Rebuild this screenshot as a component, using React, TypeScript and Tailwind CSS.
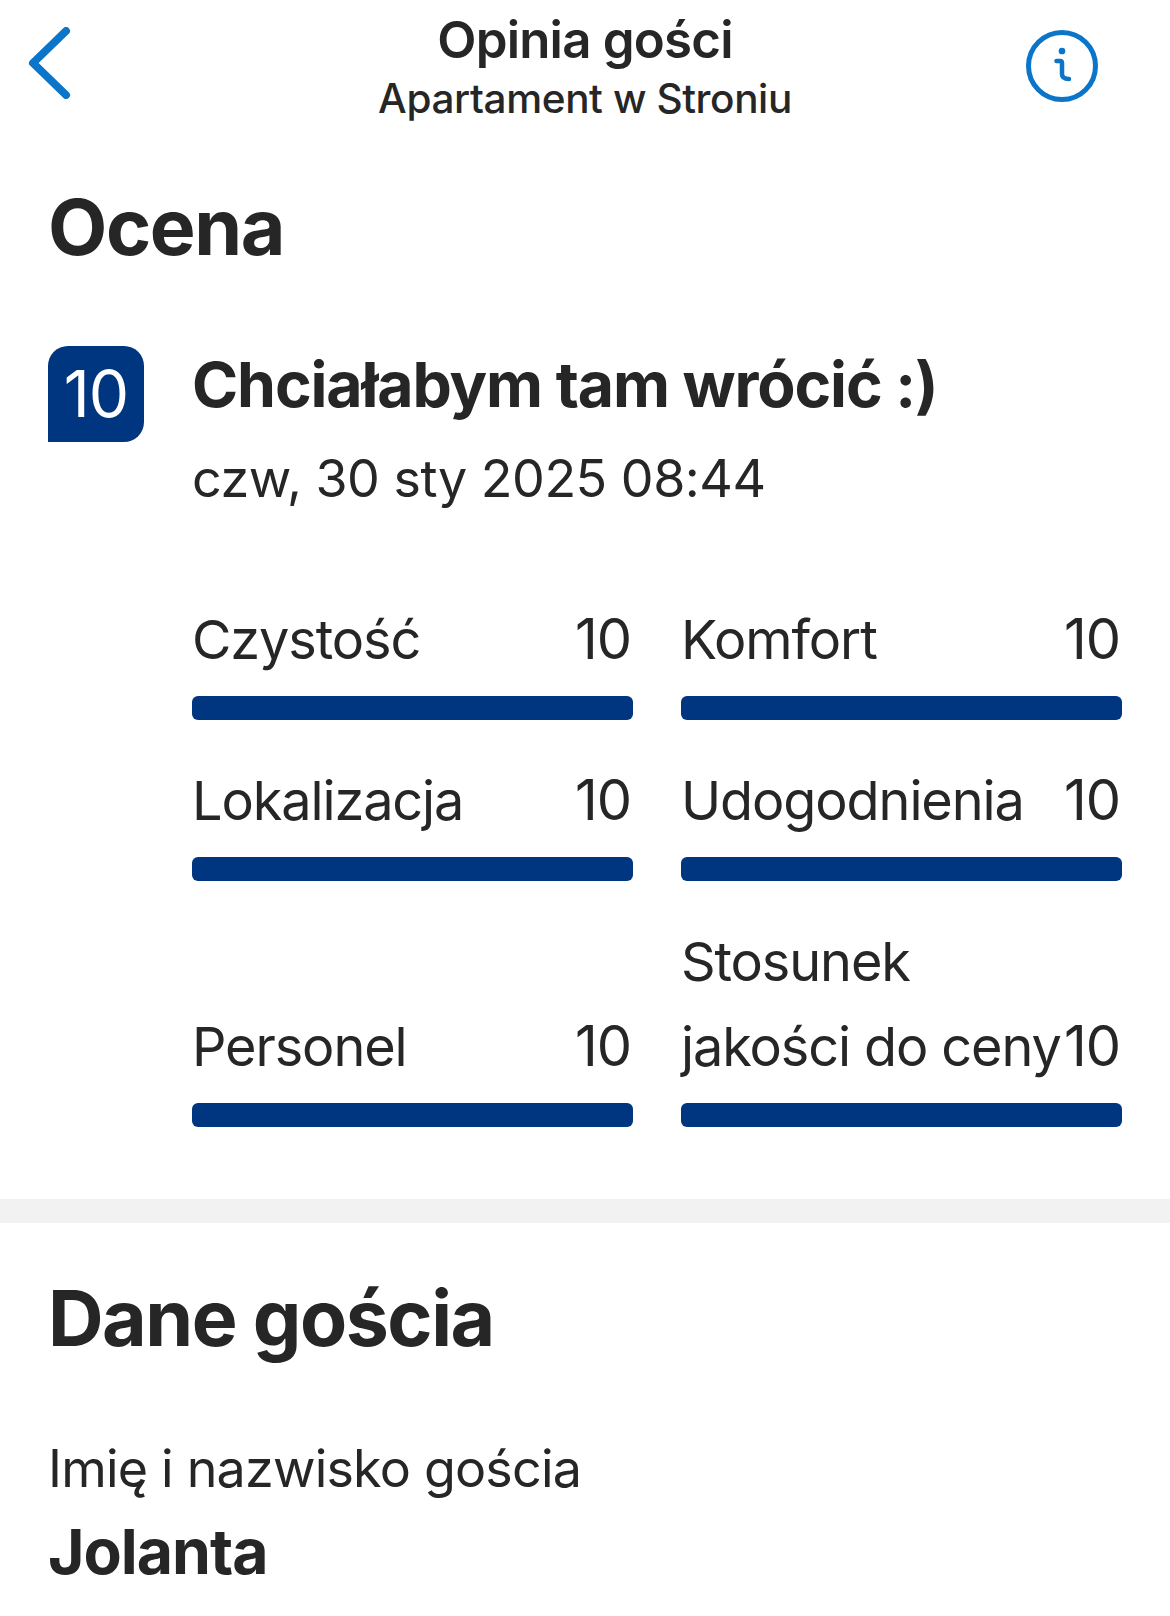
const scores = [
  { label: 'Czystość', value: 10 },
  { label: 'Komfort', value: 10 },
  { label: 'Lokalizacja', value: 10 },
  { label: 'Udogodnienia', value: 10 },
  { label: 'Personel', value: 10 },
  { label: 'Stosunek jakości do ceny', value: 10 },
];

const ScoreItem = ({ label, value }: { label: string; value: number }) => (
  <div className="flex flex-col justify-end">
    <div className="flex items-end justify-between pr-[2px]">
      <span className="text-[54px] leading-[85px] tracking-[-1.1px] text-[#262626]">{label}</span>
      <span className="shrink-0 text-[56px] leading-[85px] tracking-[-1px] text-[#262626]">{value}</span>
    </div>
    <div className="mt-[14px] h-[24px] rounded-[6px] bg-[#003580]" />
  </div>
);

export default function App() {
  return (
    <div className="h-[1616px] w-[1170px] overflow-hidden bg-white font-['Inter','Liberation_Sans',sans-serif] text-[#262626]">
      <header className="grid grid-cols-[1fr_auto_1fr] items-start px-[28px] pt-[12px]">
        <svg width="44" height="72" viewBox="0 0 44 72" className="mt-[15px]" fill="none">
          <path d="M38 4 L5 36 L38 68" stroke="#0a75c9" strokeWidth="8" strokeLinecap="round" strokeLinejoin="round" />
        </svg>
        <div className="flex flex-col items-center">
          <div className="text-[51px] font-semibold leading-[56px] tracking-[-0.8px]">Opinia gości</div>
          <div className="mt-[6px] text-[40.5px] font-medium leading-[50px] tracking-[-0.4px]">Apartament w Stroniu</div>
        </div>
        <svg width="72" height="72" viewBox="0 0 72 72" className="mr-[44px] mt-[18px] justify-self-end" fill="none" stroke="#0a75c9" strokeLinecap="round">
          <circle cx="36" cy="36" r="33.5" strokeWidth="5" />
          <path d="M30.5 31 H34 Q36 31 36 33 V44 Q36 49 43 49" strokeWidth="4.5" strokeLinejoin="round" />
          <circle cx="36" cy="21" r="2.6" fill="#0a75c9" strokeWidth="1.5" />
        </svg>
      </header>

      <section className="px-[48px] pt-[58px]">
        <h2 className="text-[77px] font-bold leading-[90px] tracking-[-1.4px]">Ocena</h2>
        <div className="mt-[74px] flex gap-[48px]">
          <div className="flex h-[96px] w-[96px] shrink-0 items-center justify-center rounded-[20px] rounded-bl-none bg-[#003580] text-[64px] leading-none tracking-[-1px] text-white">
            10
          </div>
          <div>
            <div className="text-[62.5px] font-bold leading-[76px] tracking-[-1.13px]">Chciałabym tam wrócić :)</div>
            <div className="mt-[18px] text-[52px] leading-[78px] tracking-[-0.5px]">czw, 30 sty 2025 08:44</div>
          </div>
        </div>
      </section>

      <section className="ml-[192px] mr-[48px] mt-[79px] grid grid-cols-2 gap-x-[48px] gap-y-[38px]">
        {scores.map((s) => (
          <ScoreItem key={s.label} label={s.label} value={s.value} />
        ))}
      </section>

      <div className="mt-[72px] h-[24px] bg-[#f2f2f2]" />

      <section className="px-[48px] pt-[50px]">
        <h2 className="text-[77px] font-bold leading-[90px] tracking-[-1.5px]">Dane gościa</h2>
        <div className="mt-[68px] text-[52px] leading-[76px] tracking-[-0.8px]">Imię i nazwisko gościa</div>
        <div className="mt-[6px] text-[62.5px] font-bold leading-[76px] tracking-[-1px]">Jolanta</div>
      </section>
    </div>
  );
}
